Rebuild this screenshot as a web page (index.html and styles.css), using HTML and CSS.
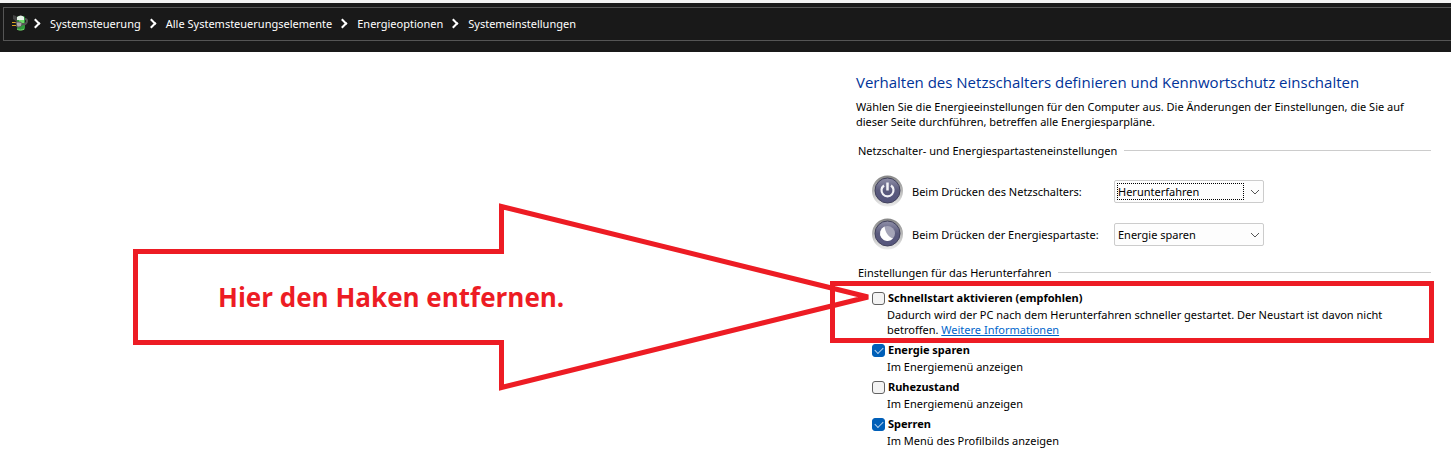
FILE: index.html
```
<!DOCTYPE html>
<html lang="de">
<head>
  <meta charset="UTF-8" />
  <meta name="viewport" content="width=device-width, initial-scale=1" />
  <title>Systemeinstellungen</title>
  <link rel="stylesheet" href="styles.css">
</head>
<body>

<header class="topbar">
  <nav class="address" aria-label="Pfad">
    <svg class="app-icon" width="18" height="18" viewBox="0 0 18 18">
      <path d="M2 1l3 1 3 4-2 2-4-3z" fill="#444"/>
      <rect x="6" y="2" width="8" height="14" rx="2" fill="#2f9a3c"/>
      <path d="M6 3q4-3 7 0v3H6z" fill="#e9f3ea"/>
      <path d="M8 6h5v3H8z" fill="#6fdc6a"/>
      <path d="M6 15c2 1.500 5 1.500 7 0" stroke="#7be072" fill="none"/>
      <path d="M1 8.500h4M1 11.500h4" stroke="#d9a520"/>
      <path d="M5 8h3c2 0 3 1 3 2s-1 3-3 3H6z" fill="#a9a9a9" stroke="#555"/>
      <path d="M11 10c3 1 5-1 5-3s-1-2-2-2" stroke="#555" stroke-width="2" fill="none"/>
    </svg>
    <ol class="crumbs">
      <li><a href="#">Systemsteuerung</a></li>
      <li><a href="#">Alle Systemsteuerungselemente</a></li>
      <li><a href="#">Energieoptionen</a></li>
      <li><a href="#">Systemeinstellungen</a></li>
    </ol>
  </nav>
</header>

<main>
  <div class="panel">
    <h1>Verhalten des Netzschalters definieren und Kennwortschutz einschalten</h1>
    <p class="intro">Wählen Sie die Energieeinstellungen für den Computer aus. Die Änderungen der Einstellungen, die Sie auf<br>dieser Seite durchführen, betreffen alle Energiesparpläne.</p>

    <h2>Netzschalter- und Energiespartasteneinstellungen</h2>
    <div class="buttons">
      <div class="row">
        <svg class="round" width="32" height="32" viewBox="0 0 32 32">
          <defs>
            <linearGradient id="rim" x1="0" y1="0" x2="0" y2="1">
              <stop offset="0" stop-color="#858585"/>
              <stop offset="1" stop-color="#ececec"/>
            </linearGradient>
            <linearGradient id="face" x1="0" y1="0" x2="0" y2="1">
              <stop offset="0" stop-color="#8f8fa8"/>
              <stop offset="0.500" stop-color="#5b5b7d"/>
              <stop offset="1" stop-color="#54547c"/>
            </linearGradient>
          </defs>
          <circle cx="15.500" cy="16" r="15.500" fill="url(#rim)"/>
          <circle cx="15.500" cy="15.500" r="12.500" fill="url(#face)" stroke="#40405a"/>
          <path d="M12 10.500a6 6 0 1 0 7 0" fill="none" stroke="#f2f2f6" stroke-width="2.200"/>
          <path d="M15.500 7.500v8" stroke="#f2f2f6" stroke-width="2.500"/>
        </svg>
        <label for="power">Beim Drücken des Netzschalters:</label>
        <div class="combo focused">
          <select id="power">
            <option>Herunterfahren</option>
            <option>Energie sparen</option>
            <option>Nichts unternehmen</option>
          </select>
          <svg class="arrow-down" width="10" height="6" viewBox="0 0 10 6"><path d="M1 1l4 4 4-4"/></svg>
        </div>
      </div>
      <div class="row">
        <svg class="round" width="32" height="32" viewBox="0 0 32 32">
          <circle cx="15.500" cy="16" r="15.500" fill="url(#rim)"/>
          <circle cx="15.500" cy="15.500" r="12.500" fill="url(#face)" stroke="#40405a"/>
          <circle cx="15.500" cy="15.500" r="7.500" fill="#a5a5b8"/>
          <path d="M12.500 8.600a7.500 7.500 0 1 0 8.500 12c-5-2-7.500-6-8.500-12z" fill="#fff"/>
        </svg>
        <label for="sleep">Beim Drücken der Energiespartaste:</label>
        <div class="combo">
          <select id="sleep">
            <option>Energie sparen</option>
            <option>Herunterfahren</option>
            <option>Nichts unternehmen</option>
          </select>
          <svg class="arrow-down" width="10" height="6" viewBox="0 0 10 6"><path d="M1 1l4 4 4-4"/></svg>
        </div>
      </div>
    </div>

    <h2>Einstellungen für das Herunterfahren</h2>
    <div class="options">
      <div class="option marked">
        <input type="checkbox" id="fast">
        <label for="fast">Schnellstart aktivieren (empfohlen)</label>
        <p>Dadurch wird der PC nach dem Herunterfahren schneller gestartet. Der Neustart ist davon nicht<br>betroffen. <a href="#">Weitere Informationen</a></p>
        <div class="callout">
          <svg width="740" height="188" viewBox="0 0 740 188">
            <path d="M2.500 48.500h366v-45L735 94 368.500 184.500v-45H2.500z"/>
          </svg>
          <span>Hier den Haken entfernen.</span>
        </div>
      </div>
      <div class="option">
        <input type="checkbox" id="save" checked>
        <label for="save">Energie sparen</label>
        <p>Im Energiemenü anzeigen</p>
      </div>
      <div class="option">
        <input type="checkbox" id="hibernate">
        <label for="hibernate">Ruhezustand</label>
        <p>Im Energiemenü anzeigen</p>
      </div>
      <div class="option">
        <input type="checkbox" id="lock" checked>
        <label for="lock">Sperren</label>
        <p>Im Menü des Profilbilds anzeigen</p>
      </div>
    </div>
  </div>
</main>

</body>
</html>
```

FILE: styles.css
```
* {
  box-sizing: border-box;
}

body {
  margin: 0;
  background: #fff;
  color: #000;
  font-family: "Noto Sans", "Open Sans", sans-serif;
  font-size: 11px;
  line-height: 15px;
  overflow-x: hidden;
}

h1, h2, p, ol {
  margin: 0;
  padding: 0;
  font-weight: normal;
}

/* address bar */
.topbar {
  background: #191919;
  border-top: 3px solid #f3f3f3;
  padding: 4px 0 11px 3px;
}

.address {
  display: flex;
  align-items: center;
  height: 34px;
  padding: 0 0 2px 7px;
  border: 1px solid #555;
  border-right: none;
}

.crumbs {
  display: flex;
  list-style: none;
}

.crumbs li {
  display: flex;
  align-items: center;
}

.crumbs li::before {
  content: "";
  width: 5px;
  height: 5px;
  margin: 0 11px 0 7px;
  border: solid #fff;
  border-width: 2px 2px 0 0;
  transform: rotate(45deg);
}

.crumbs li:first-child::before {
  margin-left: 3px;
}

.crumbs a {
  color: #fff;
  text-decoration: none;
}

/* settings */
main {
  display: flex;
  justify-content: flex-end;
  padding: 18px 20px 12px;
}

.panel {
  width: 575px;
}

h1 {
  color: #003399;
  font-family: "Open Sans", "Noto Sans", sans-serif;
  font-size: 15px;
  line-height: 24px;
  white-space: nowrap;
}

.intro {
  margin: 5px 0 14px;
  white-space: nowrap;
}

h2 {
  display: flex;
  align-items: center;
  gap: 7px;
  padding-left: 2px;
  font-size: 11px;
  line-height: 15px;
}

h2::after {
  content: "";
  flex: 1;
  height: 1px;
  background: #ccc;
}

.buttons {
  display: flex;
  flex-direction: column;
  gap: 11px;
  padding: 17px 0 15px 16px;
}

.row {
  display: flex;
  align-items: center;
}

.row label {
  width: 202px;
  margin-left: 8px;
}

.combo {
  position: relative;
  width: 150px;
}

.combo select {
  display: block;
  appearance: none;
  width: 100%;
  height: 23px;
  padding: 0 3px;
  background: #fdfdfd;
  border: 1px solid #ccc;
  border-radius: 2px;
  color: #000;
  font: inherit;
}

.combo.focused::after {
  content: "";
  position: absolute;
  inset: 3px 20px 3px 3px;
  border: 1px dotted #000;
  pointer-events: none;
}

.arrow-down {
  position: absolute;
  right: 4px;
  top: 9px;
  fill: none;
  stroke: #555;
  pointer-events: none;
}

.options {
  display: flex;
  flex-direction: column;
  gap: 4px;
  padding: 9px 0 0 16px;
}

.option {
  display: grid;
  grid-template-columns: 13px 1fr;
  column-gap: 3px;
  align-items: center;
}

.option label {
  font-weight: bold;
  line-height: 18px;
}

.option p {
  grid-column: 1 / -1;
  padding-left: 15px;
  white-space: nowrap;
}

.option a {
  color: #0066cc;
}

input[type="checkbox"] {
  appearance: none;
  display: grid;
  place-items: center;
  width: 13px;
  height: 13px;
  margin: 0;
  background: #f3f3f3;
  border: 1px solid #626262;
  border-radius: 3px;
}

input[type="checkbox"]:checked {
  background: #005fb8;
  border-color: #005fb8;
}

input[type="checkbox"]:checked::before {
  content: "";
  width: 7px;
  height: 4px;
  margin-bottom: 2px;
  border: solid #b8d4ee;
  border-width: 0 0 1px 1px;
  transform: rotate(-45deg);
}

/* red frame and arrow on top of the first option */
.marked {
  position: relative;
}

.marked::after {
  content: "";
  position: absolute;
  inset: -8px -3px -6px -42px;
  border: 5px solid #ed1c24;
  pointer-events: none;
}

.callout {
  position: absolute;
  right: 100%;
  top: -86px;
  display: flex;
  align-items: center;
  margin-right: -1px;
  color: #ed1c24;
  pointer-events: none;
}

.callout svg {
  fill: none;
  stroke: currentColor;
  stroke-width: 5;
}

.callout span {
  position: absolute;
  left: 85px;
  font-family: "Open Sans", "Noto Sans", sans-serif;
  font-size: 26px;
  font-weight: bold;
  line-height: 34px;
  white-space: nowrap;
}
```
